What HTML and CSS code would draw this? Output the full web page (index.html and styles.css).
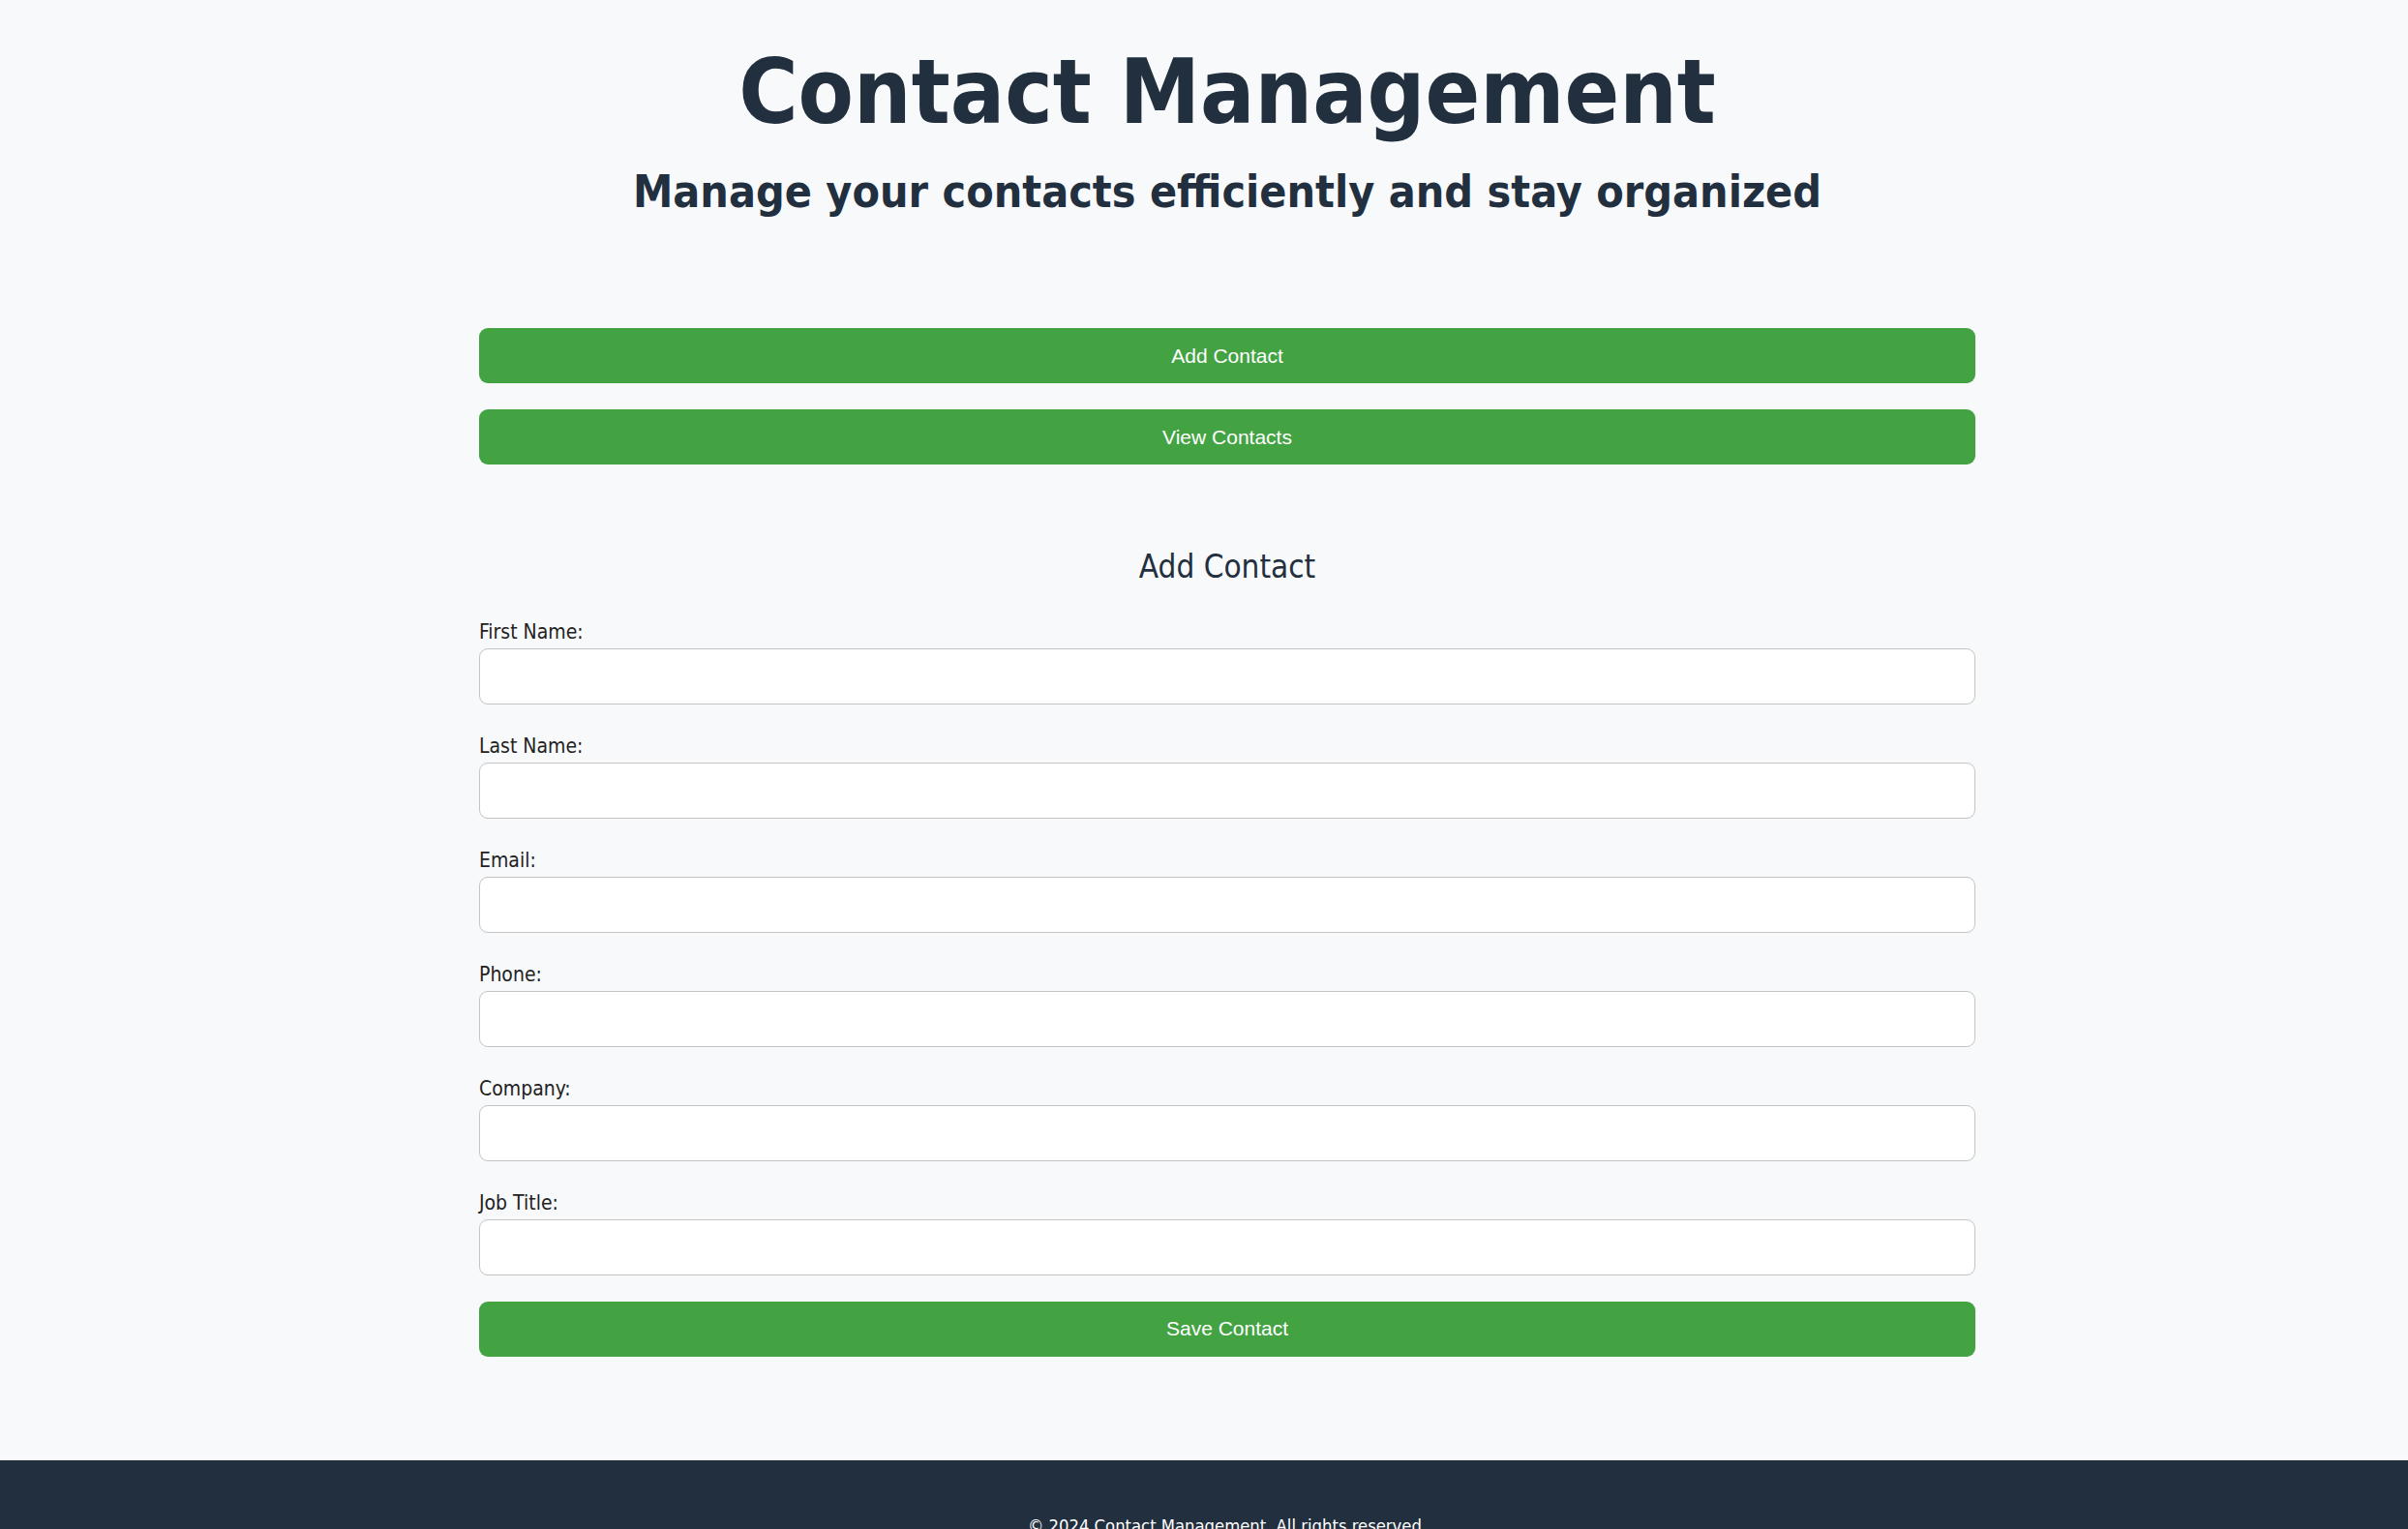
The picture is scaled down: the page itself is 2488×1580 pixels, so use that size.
FILE: index.html
```html
<!DOCTYPE html>
<html lang="en">
<head>
<meta charset="utf-8">
<title>Contact Management</title>
<link rel="stylesheet" href="styles.css">
</head>
<body>
<div class="page">
  <header class="hero">
    <h1 class="hero-title">Contact Management</h1>
    <h2 class="hero-sub">Manage your contacts efficiently and stay organized</h2>
  </header>
  <main class="container">
    <nav class="actions">
      <button class="btn" type="button">Add Contact</button>
      <button class="btn" type="button">View Contacts</button>
    </nav>
    <section class="form-section">
      <h3 class="form-title">Add Contact</h3>
      <form class="form">
        <div class="field">
          <label class="label" for="fn">First Name:</label>
          <input class="input" id="fn" type="text">
        </div>
        <div class="field">
          <label class="label" for="ln">Last Name:</label>
          <input class="input" id="ln" type="text">
        </div>
        <div class="field">
          <label class="label" for="em">Email:</label>
          <input class="input" id="em" type="email">
        </div>
        <div class="field">
          <label class="label" for="ph">Phone:</label>
          <input class="input" id="ph" type="tel">
        </div>
        <div class="field">
          <label class="label" for="co">Company:</label>
          <input class="input" id="co" type="text">
        </div>
        <div class="field">
          <label class="label" for="jt">Job Title:</label>
          <input class="input" id="jt" type="text">
        </div>
        <button class="btn save" type="button">Save Contact</button>
      </form>
    </section>
  </main>
</div>
<footer class="footer">
  <p class="footer-text">© 2024 Contact Management. All rights reserved.</p>
</footer>
</body>
</html>
```

FILE: styles.css
```css
* { box-sizing: border-box; }

html, body {
  margin: 0;
  padding: 0;
}

body {
  background: #f8f9fa;
  font-family: "DejaVu Sans Condensed", "DejaVu Sans", sans-serif;
  color: #222f3e;
}

.page {
  padding-left: 48px;
}

.hero {
  text-align: center;
  padding-top: 37px;
}

.hero-title {
  margin: 0;
  font-size: 93px;
  line-height: 116px;
  font-weight: bold;
  color: #222f3e;
}

.hero-sub {
  margin: 17px 0 0;
  font-size: 46.2px;
  line-height: 56px;
  font-weight: bold;
  color: #222f3e;
}

.container {
  width: 1546px;
  margin: 113px auto 0;
}

.actions {
  display: flex;
  flex-direction: column;
  gap: 27px;
}

.btn {
  display: block;
  width: 100%;
  height: 57px;
  border: none;
  border-radius: 9px;
  background: #43a343;
  color: #ffffff;
  font-family: "Liberation Sans", Arial, sans-serif;
  font-size: 21px;
  padding: 0;
}

.form-section {
  margin-top: 85px;
}

.form-title {
  margin: 0;
  text-align: center;
  font-size: 33px;
  line-height: 42px;
  font-weight: normal;
  color: #222f3e;
}

.form {
  display: flex;
  flex-direction: column;
  margin-top: 35px;
}

.field {
  display: flex;
  flex-direction: column;
  margin-bottom: 31.7px;
}

.field:last-of-type {
  margin-bottom: 26.5px;
}

.label {
  font-size: 21px;
  line-height: 22px;
  color: #222;
  margin-bottom: 6px;
}

.input {
  height: 58.3px;
  width: 100%;
  border: 1px solid #c4c4c4;
  border-radius: 9px;
  background: #ffffff;
  font-size: 19px;
}

.save {
  margin-bottom: 107px;
}

.footer {
  background: #222f3e;
  padding: 56px 0 40px 48px;
  text-align: center;
}

.footer-text {
  margin: 0;
  color: #ffffff;
  font-size: 18.3px;
  line-height: 24px;
}
```
